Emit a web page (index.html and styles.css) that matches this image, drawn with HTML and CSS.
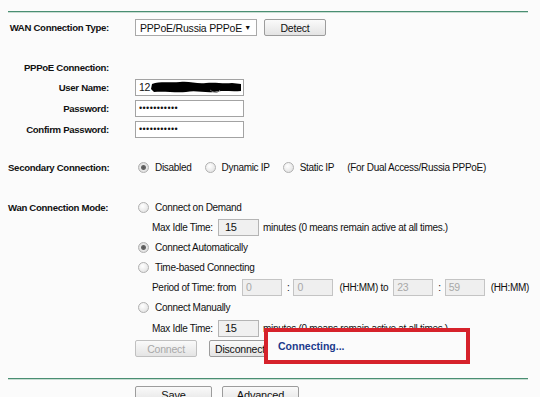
FILE: index.html
```html
<!DOCTYPE html>
<html lang="en">
<head>
    <meta charset="UTF-8">
    <title>WAN</title>
    <link rel="stylesheet" href="styles.css">
</head>
<body>
<div class="page">
    <div class="rule"></div>

    <div class="row row-type">
        <span class="lbl lbl-r">WAN Connection Type:</span>
        <span class="select">PPPoE/Russia PPPoE<span class="caret">&#9660;</span></span>
        <button class="btn btn-detect">Detect</button>
    </div>

    <div class="row row-head">
        <span class="lbl lbl-r">PPPoE Connection:</span>
    </div>
    <div class="row row-user">
        <span class="lbl lbl-r">User Name:</span>
        <span class="field field-wide">12<svg class="scribble" width="92" height="14" viewBox="0 0 92 14"><path d="M2 4 C10 1 20 3 30 2 C40 1 46 4 56 3 C66 2 72 4 82 3 L91 4 L91 11 C80 12 74 10 64 12 C54 13 46 10 36 12 C26 13 14 11 4 12 L1 9 Z" fill="#000"/><path d="M60 10 C64 13 68 13 70 10" stroke="#666" fill="none"/></svg></span>
    </div>
    <div class="row row-pass">
        <span class="lbl lbl-r">Password:</span>
        <span class="field field-wide dots">&bull;&bull;&bull;&bull;&bull;&bull;&bull;&bull;&bull;&bull;&bull;</span>
    </div>
    <div class="row row-pass">
        <span class="lbl lbl-r">Confirm Password:</span>
        <span class="field field-wide dots">&bull;&bull;&bull;&bull;&bull;&bull;&bull;&bull;&bull;&bull;&bull;</span>
    </div>

    <div class="row row-second">
        <span class="lbl lbl-l">Secondary Connection:</span>
        <span class="opt"><span class="radio on"></span>Disabled</span>
        <span class="opt"><span class="radio"></span>Dynamic IP</span>
        <span class="opt"><span class="radio"></span>Static IP</span>
        <span class="note">(For Dual Access/Russia PPPoE)</span>
    </div>

    <div class="mode">
        <div class="row">
            <span class="lbl lbl-l">Wan Connection Mode:</span>
            <span class="opt"><span class="radio"></span>Connect on Demand</span>
        </div>
        <div class="row sub">
            <span class="sub-lbl">Max Idle Time:</span>
            <span class="field field-small grey">15</span>
            <span class="after">minutes (0 means remain active at all times.)</span>
        </div>
        <div class="row">
            <span class="opt"><span class="radio on"></span>Connect Automatically</span>
        </div>
        <div class="row">
            <span class="opt"><span class="radio"></span>Time-based Connecting</span>
        </div>
        <div class="row sub">
            <span class="sub-lbl sub-lbl-period">Period of Time: from</span>
            <span class="field field-time off">0</span>
            <span class="colon">:</span>
            <span class="field field-time off">0</span>
            <span class="hh">(HH:MM) to</span>
            <span class="field field-time off">23</span>
            <span class="colon">:</span>
            <span class="field field-time off">59</span>
            <span class="hh">(HH:MM)</span>
        </div>
        <div class="row">
            <span class="opt"><span class="radio"></span>Connect Manually</span>
        </div>
        <div class="row sub row-idle2">
            <span class="sub-lbl">Max Idle Time:</span>
            <span class="field field-small grey">15</span>
            <span class="after">minutes (0 means remain active at all times.)</span>
        </div>
        <div class="row row-btns">
            <button class="btn btn-off">Connect</button>
            <button class="btn">Disconnect</button>
        </div>
        <div class="status">Connecting...</div>
    </div>

    <div class="rule rule-bottom"></div>

    <div class="row row-save">
        <button class="btn btn-save">Save</button>
        <button class="btn btn-save">Advanced</button>
    </div>
</div>
</body>
</html>
```

FILE: styles.css
```css
body {
    margin: 0;
    background: #fbfbfb;
    font-family: "Liberation Sans", Arial, sans-serif;
    font-size: 10px;
    letter-spacing: -0.3px;
    color: #111;
    overflow: hidden;
}
.page {
    width: 540px;
}
.rule {
    margin: 11px 0 0 8px;
    width: 520px;
    height: 1px;
    background: #4a8e72;
    border-bottom: 1px solid #c8ddd3;
}
.rule-bottom {
    margin-top: 21px;
}
.row {
    display: flex;
    align-items: center;
    height: 16px;
    white-space: nowrap;
}
.lbl {
    flex: 0 0 auto;
    width: 135px;
    box-sizing: border-box;
    font-weight: bold;
    font-size: 9.6px;
    letter-spacing: -0.3px;
}
.lbl-r {
    text-align: right;
    padding-right: 26px;
}
.lbl-l {
    padding-left: 8px;
    margin-right: 3px;
}
.row-type {
    margin-top: 6px;
    height: 17px;
}
.row-head {
    margin-top: 23px;
}
.row-user {
    margin-top: 4px;
}
.row-pass {
    margin-top: 5px;
}
.row-second {
    margin-top: 22px;
}

.select {
    display: flex;
    align-items: center;
    justify-content: space-between;
    width: 122px;
    height: 17px;
    box-sizing: border-box;
    padding: 0 5px 0 4px;
    background: #fff;
    border: 1px solid #a9a9a9;
    font-size: 10.5px;
    letter-spacing: -0.2px;
}
.caret {
    font-size: 7px;
}
.btn {
    height: 17px;
    width: 62px;
    padding: 0;
    box-sizing: border-box;
    border: 1px solid #9c9c9c;
    border-radius: 2px;
    background: linear-gradient(#fafafa, #e4e4e4);
    font-family: "Liberation Sans", Arial, sans-serif;
    font-size: 10.5px;
    letter-spacing: -0.2px;
    color: #111;
}
.btn-detect {
    margin-left: 7px;
}
.btn-off {
    color: #a8a8a8;
    border-color: #c0c0c0;
}
.btn-save {
    width: 77px;
    margin-right: 10px;
    font-size: 11px;
}

.field {
    display: flex;
    align-items: center;
    height: 17px;
    box-sizing: border-box;
    padding-left: 3px;
    background: #fff;
    border: 1px solid #a3a3a3;
    font-size: 10.5px;
    overflow: hidden;
}
.field-wide {
    width: 109px;
}
.scribble {
    flex: 0 0 auto;
}
.dots {
    font-size: 9px;
    letter-spacing: 0.4px;
}
.field-small {
    width: 41px;
    padding-left: 6px;
    font-size: 11px;
}
.grey {
    background: #f0f0f0;
    border-color: #b4b4b4;
}
.field-time {
    width: 40px;
}
.off {
    background: #efefef;
    border-color: #c4c4c4;
    color: #a8a8a8;
}

.opt {
    display: flex;
    align-items: center;
    margin-right: 13px;
}
.radio {
    width: 9px;
    height: 9px;
    margin-right: 6px;
    border: 1px solid #b0b0b0;
    border-radius: 50%;
    background: radial-gradient(circle at 40% 35%, #fff, #dcdcdc);
}
.radio.on {
    background: radial-gradient(circle, #555 0, #666 2px, #e8e8e8 3px, #d0d0d0);
}

.mode {
    position: relative;
    display: flex;
    flex-direction: column;
    gap: 4px;
    margin-top: 24px;
}
.mode .row > .opt:first-child {
    margin-left: 138px;
}
.sub {
    padding-left: 152px;
}
.sub-lbl {
    width: 66px;
}
.sub-lbl-period {
    width: 90px;
}
.after {
    margin-left: 4px;
}
.colon {
    margin: 0 4px 0 5px;
}
.hh {
    margin: 0 5px 0 6px;
}
.row-idle2 {
    margin-top: 1px;
}
.row-btns {
    padding-left: 135px;
    height: 17px;
}
.row-btns .btn + .btn {
    margin-left: 12px;
}

.status {
    position: absolute;
    left: 264px;
    top: 129px;
    width: 206px;
    height: 36px;
    box-sizing: border-box;
    border: 4px solid #d6222b;
    background: #fbfbfb;
    padding: 0 0 0 10px;
    display: flex;
    align-items: center;
    color: #1b3a8c;
    font-weight: bold;
    font-size: 10.5px;
    letter-spacing: 0;
}

.row-save {
    margin-top: 6px;
    padding-left: 135px;
    height: 17px;
}
```
